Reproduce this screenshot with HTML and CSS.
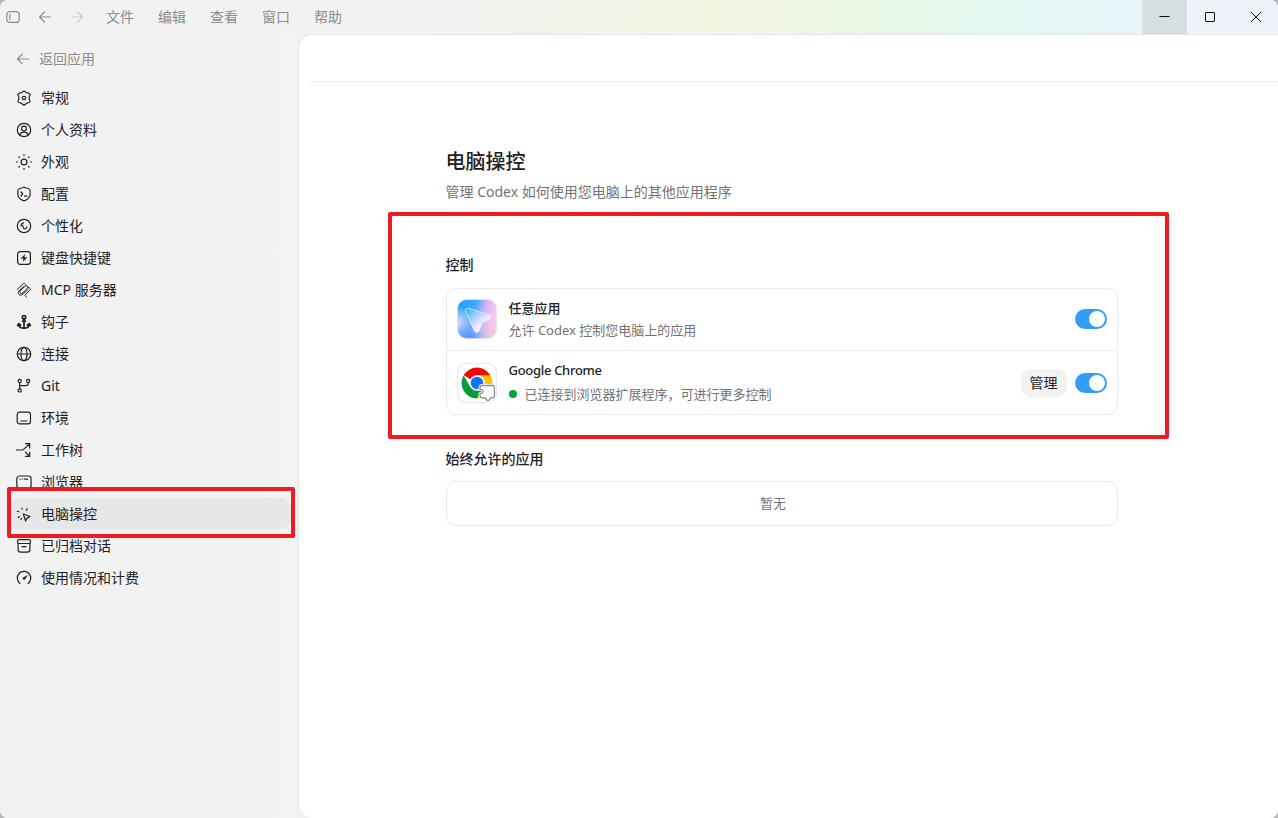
FILE: index.html
```html
<!DOCTYPE html>
<html lang="zh-CN">

<head>
  <meta charset="utf-8">
  <title>电脑操控</title>
  <link rel="stylesheet" href="styles.css">
</head>

<body>
  <div class="window">
    <header class="titlebar">
      <div class="title-icons">
        <svg width="14" height="14" viewBox="0 0 14 14"><rect x="0.8" y="1.6" width="12.4" height="10.8" rx="3"/><path d="M3.8 4.5v5"/></svg>
        <svg width="14" height="14" viewBox="0 0 14 14"><path d="M12.5 7H1.5M6.5 2L1.5 7l5 5"/></svg>
        <svg class="disabled" width="14" height="14" viewBox="0 0 14 14"><path d="M1.5 7h11M7.5 2l5 5-5 5"/></svg>
      </div>
      <nav class="menu">
        <span>文件</span>
        <span>编辑</span>
        <span>查看</span>
        <span>窗口</span>
        <span>帮助</span>
      </nav>
      <div class="window-controls">
        <button class="control active"><svg width="12" height="12" viewBox="0 0 12 12"><path d="M.5 5.500h10"/></svg></button>
        <button class="control"><svg width="12" height="12" viewBox="0 0 12 12"><rect x="1.5" y="1.5" width="9" height="9" rx="0.5"/></svg></button>
        <button class="control"><svg width="12" height="12" viewBox="0 0 12 12"><path d="M1 1l10 10M11 1L1 11"/></svg></button>
      </div>
    </header>

    <div class="body">
      <aside class="sidebar">
        <a class="back">
          <svg width="14" height="14" viewBox="0 0 14 14"><path d="M12.7 7H1.6M6.3 2.2L1.5 7l4.8 4.8"/></svg>
          返回应用
        </a>
        <nav class="nav">
          <a class="nav-item">
            <svg viewBox="0 0 16 16"><path d="M6.600 1.700q1.400-1.300 2.800 0c.6 1 1.300 1.400 2.500 1.400 1.900 0 2.700 1.300 1.700 2.900-.8 1.300-.8 2.700 0 4 1 1.600.2 2.900-1.700 2.900-1.200 0-1.900.4-2.500 1.400q-1.400 1.300-2.800 0c-.6-1-1.300-1.400-2.500-1.400-1.900 0-2.700-1.300-1.700-2.900.8-1.300.8-2.700 0-4-1-1.600-.2-2.900 1.700-2.900 1.200 0 1.900-.4 2.500-1.400z"/><circle cx="8" cy="8" r="1.700"/></svg>
            常规
          </a>
          <a class="nav-item">
            <svg viewBox="0 0 16 16"><circle cx="8" cy="8" r="6.700"/><circle cx="8" cy="6.600" r="2.400"/><path d="M3.900 12.700C4.500 10.900 6 10.200 8 10.200s3.500.7 4.100 2.500"/></svg>
            个人资料
          </a>
          <a class="nav-item">
            <svg viewBox="0 0 16 16"><circle cx="8" cy="8" r="2.900"/><path d="M8 .6v1M8 14.400v1M.6 8h1M14.400 8h1M2.800 2.800l.7.7M12.500 12.500l.7.7M2.800 13.200l.7-.7M12.500 3.500l.7-.7"/></svg>
            外观
          </a>
          <a class="nav-item">
            <svg viewBox="0 0 16 16"><path d="M8 1.200c.5 0 1 .3 1.600.6l3 1c1 .3 1.500.9 1.500 1.800v3.900c0 3.200-3 5-4.800 5.900q-1.300.6-2.600 0C4.900 13.500 1.900 11.700 1.900 8.500V4.600c0-.9.5-1.500 1.500-1.800l3-1C7 1.500 7.500 1.200 8 1.200z"/><path d="M5 6l1.700 2L5 10M8.500 10.200h2.500"/></svg>
            配置
          </a>
          <a class="nav-item">
            <svg viewBox="0 0 16 16"><circle cx="8" cy="8" r="6.700"/><path d="M7.500 4.800C5.800 5.300 4.900 6.600 5.100 8M6.900 7.400C6.600 9.400 7.600 10.900 9.200 11c1-.2 1.700-1.100 1.800-2.200"/></svg>
            个性化
          </a>
          <a class="nav-item">
            <svg viewBox="0 0 16 16"><rect x="1.600" y="1.600" width="12.800" height="12.800" rx="2.600"/><path class="solid" d="M8.800 4.600L5 8.500h2.600l-.4 2.900L11 7.500H8.400z"/></svg>
            键盘快捷键
          </a>
          <a class="nav-item">
            <svg class="thin" viewBox="0 0 16 16"><path d="M1.300 7.500l5.600-5.600c1.600-1.400 3.600.5 2.300 2.100L4 9.200M9.200 4c1.600-1.400 3.600.5 2.300 2.100L6 11.500M4.100 9.100c-1.200 1.500.7 3.400 2.100 2.200M11.500 6.100c1.700-1.400 3.600.5 2.400 2.100L9.600 12.500c-.8.900-.4 1.600.8 2.700M7.200 4.600L2.900 8.900c-2 2.500 1.200 5.700 3.700 3.600L11.700 8"/></svg>
            MCP 服务器
          </a>
          <a class="nav-item">
            <svg class="thick" viewBox="0 0 16 16"><circle cx="8" cy="3.200" r="1.700"/><path d="M8 5v9M6.600 7.200h2.800M1.500 11.400l1.400-1.800 1.700 1.600M2.900 10v1.200C3.200 13.200 5.500 14.200 8 14.200s4.800-1 5.100-3V10M11.400 11.200l1.700-1.600 1.400 1.800"/></svg>
            钩子
          </a>
          <a class="nav-item">
            <svg viewBox="0 0 16 16"><circle cx="8" cy="8" r="6.700"/><ellipse cx="8" cy="8" rx="3" ry="6.700"/><path d="M1.300 8h13.400"/></svg>
            连接
          </a>
          <a class="nav-item">
            <svg viewBox="0 0 16 16"><circle cx="3.700" cy="2.900" r="1.600"/><circle cx="12.200" cy="2.900" r="1.600"/><circle cx="3.700" cy="12.400" r="1.600"/><path d="M3.700 4.500v6.300M12.200 4.500v1c0 1.500-.7 2.200-2.200 2.200H3.700"/></svg>
            Git
          </a>
          <a class="nav-item">
            <svg viewBox="0 0 16 16"><rect x="1.200" y="2.200" width="13.300" height="11.600" rx="2.600"/><path d="M5 11h6"/></svg>
            环境
          </a>
          <a class="nav-item">
            <svg viewBox="0 0 16 16"><path d="M.5 8h5.200c1.200 0 1.900-.6 2.700-1.400L13.500 1.800M9.500 1.700h4.200v4.200M9.400 10.200l4.300 4M13.700 10v4.300H9.400"/></svg>
            工作树
          </a>
          <a class="nav-item">
            <svg viewBox="0 0 16 16"><rect x=".8" y="2" width="14.300" height="12" rx="2.800"/><path d="M4 5.100h.2M6.300 5.100h.2M8.600 5.100h3"/></svg>
            浏览器
          </a>
          <a class="nav-item selected">
            <svg viewBox="0 0 16 16"><path d="M7.300 8l6.900 2.500-3.100 1.600-1.500 2.900zM5.800 2.200l.4 1M1.400 5.300l1.500.5M11.300 2.800l-1 1.400M2.200 11.500l1.200-.8M4.900 13.500l.6-1.200"/></svg>
            电脑操控
          </a>
          <a class="nav-item">
            <svg viewBox="0 0 16 16"><rect x="1.500" y="1.700" width="13" height="3.800" rx="1.500"/><path d="M2.100 5.500v6c0 1.800.9 2.700 2.700 2.700h6.400c1.800 0 2.700-.9 2.700-2.700v-6M6 8.700h4"/></svg>
            已归档对话
          </a>
          <a class="nav-item">
            <svg viewBox="0 0 16 16"><path d="M4 13.400A6.700 6.700 0 1 1 12 13.400"/><path class="solid" d="M11.400 5.500L7.200 7.500a1.200 1.200 0 1 0 1.700 1.700z"/></svg>
            使用情况和计费
          </a>
        </nav>
      </aside>

      <main class="main">
        <div class="toolbar"></div>
        <div class="content">
          <h1>电脑操控</h1>
          <p class="subtitle">管理 Codex 如何使用您电脑上的其他应用程序</p>

          <h2>控制</h2>
          <div class="card">
            <div class="row">
              <svg class="app-icon" viewBox="0 0 40 40">
                <defs>
                  <linearGradient id="sky" x1="0" y1="0" x2="1" y2="0.3">
                    <stop offset="0" stop-color="#14a0ff"/>
                    <stop offset="0.45" stop-color="#3fa8ff"/>
                    <stop offset="0.72" stop-color="#d3b6f6"/>
                    <stop offset="1" stop-color="#f5cdea"/>
                  </linearGradient>
                  <radialGradient id="haze" cx="0" cy="0.6" r="0.45">
                    <stop offset="0" stop-color="#f0dcfb"/>
                    <stop offset="1" stop-color="#e0d4fb" stop-opacity="0"/>
                  </radialGradient>
                  <radialGradient id="deep" cx="0.35" cy="1.05" r="0.6">
                    <stop offset="0" stop-color="#3f98ff"/>
                    <stop offset="1" stop-color="#8fa6ff" stop-opacity="0"/>
                  </radialGradient>
                  <radialGradient id="warm" cx="1" cy="1" r="0.55">
                    <stop offset="0" stop-color="#ffcabf"/>
                    <stop offset="1" stop-color="#efb9e8" stop-opacity="0"/>
                  </radialGradient>
                  <linearGradient id="pointer" x1="0" y1="0" x2="0.75" y2="0.8">
                    <stop offset="0.05" stop-color="#08bcff"/>
                    <stop offset="0.35" stop-color="#8fc6ff"/>
                    <stop offset="0.75" stop-color="#efe2fc"/>
                    <stop offset="1" stop-color="#fffaff"/>
                  </linearGradient>
                </defs>
                <rect x="0.500" y="0.500" width="39" height="39" rx="9" fill="url(#sky)"/>
                <rect x="0.500" y="0.500" width="39" height="39" rx="9" fill="url(#haze)"/>
                <rect x="0.500" y="0.500" width="39" height="39" rx="9" fill="url(#deep)"/>
                <rect x="0.500" y="0.500" width="39" height="39" rx="9" fill="url(#warm)" stroke="#e4e4ea" stroke-width="0.800"/>
                <path d="M12 9.500L32 15.800c2.800 1 2.800 3.400.3 4.600L26 23.300l-4.200 8.700c-1.100 2.200-3.700 2-4.600-.4L9 13.200c-.9-2.500.5-4.500 3-3.700z" fill="url(#pointer)" stroke="#dcecff" stroke-width="0.900"/>
              </svg>
              <div class="row-text">
                <div class="row-title">任意应用</div>
                <div class="row-desc">允许 Codex 控制您电脑上的应用</div>
              </div>
              <button class="switch"></button>
            </div>
            <div class="row chrome">
              <svg class="app-icon" viewBox="0 0 40 40">
                <rect x="0.500" y="0.500" width="39" height="39" rx="9" fill="#fff" stroke="#e8e8e8"/>
                <path d="M20 20L6.600 12.300A15.500 15.500 0 0 1 33.400 12.300z" fill="#f00a08"/>
                <path d="M20 12.300h13.400A15.500 15.500 0 0 1 20 35.500l6.700-11.600z" fill="#ffc107"/>
                <path d="M6.600 12.300A15.500 15.500 0 0 0 20 35.500l6.700-11.600L13.300 23.900z" fill="#0a9b3c"/>
                <circle cx="20" cy="20" r="7.700" fill="#fff"/>
                <circle cx="20" cy="20" r="6.200" fill="#0b75f0"/>
                <path d="M25 22.500h10.500q2 0 2 2v8.300q0 2-2 2h-2.300v.7q-.2 2-2.200 2t-2.200-2v-.7H25q-2 0-2-2v-2.400h1q2-.2 2-2t-2-2h-1v-1.900q0-2 2-2z" fill="#fff" stroke="#fff" stroke-width="3"/>
                <path d="M25 22.500h10.500q2 0 2 2v8.300q0 2-2 2h-2.300v.7q-.2 2-2.200 2t-2.200-2v-.7H25q-2 0-2-2v-2.400h1q2-.2 2-2t-2-2h-1v-1.900q0-2 2-2z" fill="#fff" stroke="#8f8f8f" stroke-width="1.300"/>
              </svg>
              <div class="row-text">
                <div class="row-title">Google Chrome</div>
                <div class="row-desc"><span class="dot"></span>已连接到浏览器扩展程序，可进行更多控制</div>
              </div>
              <button class="manage">管理</button>
              <button class="switch"></button>
            </div>
          </div>

          <h2 class="allowed">始终允许的应用</h2>
          <div class="card empty">暂无</div>
        </div>
      </main>
    </div>

    <!-- Highlight frames over the page -->
    <div class="frame frame-nav"></div>
    <div class="frame frame-control"></div>
  </div>
</body>

</html>
```
FILE: styles.css
```css
:root {
  --bg-color: #f2f2f2;
  --text-color: #1f2124;
  --secondary-text: #737373;
  --menu-text: #8d8d8d;
  --border-color: #ebebeb;
  --accent: #339cff;
  --frame: #ed1c24;
}

* {
  box-sizing: border-box;
}

body {
  margin: 0;
  background: #b4b4b4;
  color: var(--text-color);
  font-family: "Noto Sans", "Noto Sans CJK SC", sans-serif;
  font-size: 14px;
  line-height: 20px;
}

button {
  border: none;
  padding: 0;
  font: inherit;
  color: inherit;
}

svg {
  flex: none;
  fill: none;
  stroke: currentColor;
  stroke-width: 1.2;
  stroke-linecap: round;
  stroke-linejoin: round;
}

.window {
  position: relative;
  display: flex;
  flex-direction: column;
  width: 1278px;
  height: 818px;
  overflow: hidden;
  border-radius: 8px;
  background: var(--bg-color);
}

/* Title bar */
.titlebar {
  display: flex;
  align-items: center;
  height: 34px;
  padding-left: 6px;
  background: linear-gradient(100deg, #f2f2f2 34%, #f3f3ea 46%, #f3f5e1 56%, #eef7e1 64%, #e6f9e8 71%, #e4f8ee 75%, #e3f8f4 80%, #e8f5f9 89%, #edf2fa 94%, #f2f3f7 100%);
  color: var(--menu-text);
}

.title-icons {
  display: flex;
  gap: 18px;
}

.title-icons .disabled {
  color: #c9c9c9;
}

.menu {
  display: flex;
  gap: 24px;
  margin-left: 22px;
}

.window-controls {
  display: flex;
  height: 34px;
  margin-left: auto;
}

.control {
  display: flex;
  align-items: center;
  justify-content: center;
  width: 46px;
  background: #eff3f9;
  color: #111;
}

.control:last-child {
  width: 45px;
}

.control svg {
  stroke-width: 1;
  stroke-linecap: butt;
}

.control.active {
  width: 45px;
  background: #d6dee0;
}

.body {
  display: flex;
  flex: 1;
}

/* Sidebar */
.sidebar {
  width: 299px;
  padding: 10px 8px 0;
  background: linear-gradient(90deg, #f2f2f2 85%, #f3f3f0);
}

.back {
  display: flex;
  align-items: center;
  gap: 9px;
  height: 30px;
  padding-left: 8px;
  color: var(--menu-text);
}

.nav {
  display: flex;
  flex-direction: column;
  gap: 1px;
  margin-top: 8px;
}

.nav-item {
  display: flex;
  align-items: center;
  gap: 9px;
  width: 283px;
  height: 31px;
  padding-left: 8px;
  border-radius: 10px;
}

.nav-item svg {
  width: 16px;
  height: 16px;
}

.nav-item .solid {
  fill: currentColor;
  stroke-width: 0.3;
}

.nav-item .thin {
  stroke-width: 1;
}

.nav-item .thick {
  stroke-width: 1.7;
}

.nav-item.selected {
  background: #e6e7e7;
}

/* Main panel */
.main {
  flex: 1;
  border: 1px solid #e4e6e6;
  border-width: 1px 0 0 1px;
  border-radius: 14px 0 0 14px;
  margin-left: -1px;
  background: #fff;
}

.toolbar {
  height: 47px;
  margin-left: 10px;
  border-bottom: 1px solid #eeeeee;
}

.content {
  width: 672px;
  margin: 65px 0 0 147px;
}

h1 {
  margin: 0 0 0 -0.5px;
  font-size: 20px;
  font-weight: 500;
  line-height: 30px;
}

.subtitle {
  margin: 5px 0 0 -0.5px;
  color: var(--secondary-text);
}

h2 {
  margin: 53px 0 13px -0.5px;
  font-size: 14px;
  font-weight: 500;
}

h2.allowed {
  margin: 34px 0 12px -0.5px;
}

.card {
  border: 1px solid var(--border-color);
  border-radius: 10px;
}

.row {
  display: flex;
  align-items: center;
  height: 61px;
  padding: 0 10px 1px;
}

.row.chrome {
  height: 64px;
  padding-bottom: 0;
  border-top: 1px solid var(--border-color);
}

.app-icon {
  width: 40px;
  height: 40px;
  stroke: none;
}

.row-text {
  flex: 1;
  margin-left: 11.5px;
  font-size: 13px;
}

.row-title {
  font-weight: 500;
}

.row-desc {
  display: flex;
  align-items: center;
  margin-top: 2px;
  color: var(--secondary-text);
}

.chrome .row-text {
  padding-bottom: 2px;
}

.chrome .row-title {
  letter-spacing: -0.3px;
}

.chrome .row-desc {
  margin-top: 4px;
}

.dot {
  width: 8px;
  height: 8px;
  margin-right: 8px;
  border-radius: 50%;
  background: #07a33f;
}

.manage {
  width: 46px;
  height: 28px;
  margin-right: 8px;
  padding-right: 1px;
  border-radius: 9px;
  background: #f2f2f2;
}

.switch {
  display: flex;
  align-items: center;
  justify-content: flex-end;
  width: 32px;
  height: 20px;
  padding-right: 2px;
  border-radius: 10px;
  background: var(--accent);
}

.switch::after {
  content: "";
  width: 16px;
  height: 16px;
  border-radius: 50%;
  background: #fff;
}

.empty {
  height: 45px;
  padding-right: 18px;
  color: var(--secondary-text);
  font-size: 13px;
  line-height: 43px;
  text-align: center;
}

.frame {
  position: absolute;
  border: 4px solid var(--frame);
  border-radius: 2px;
}

.frame-nav {
  left: 7px;
  top: 487px;
  width: 288px;
  height: 51px;
}

.frame-control {
  left: 388px;
  top: 212px;
  width: 781px;
  height: 227px;
}
```
